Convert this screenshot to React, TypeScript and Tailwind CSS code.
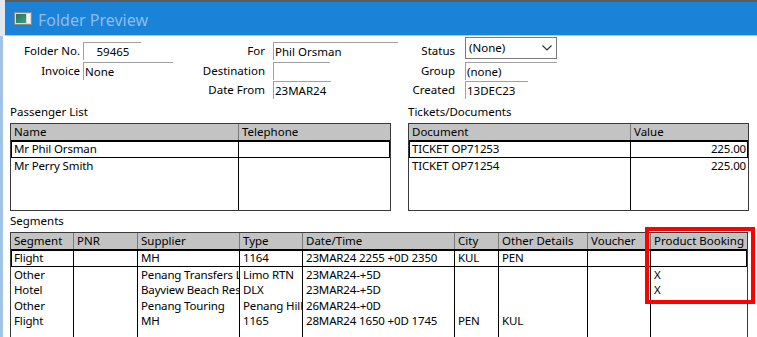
import React from "react"

const font = "font-['Noto_Sans',sans-serif]"

function Label({ children, className }: { children?: React.ReactNode; className: string }) {
	return <div className={`h-[18px] shrink-0 text-right text-[11.5px] leading-[18px] text-black ${className}`}>{children}</div>
}

function Input({ value, className }: { value?: string; className: string }) {
	return (
		<div
			className={`h-[18px] overflow-hidden border-t border-l border-[#a0a0a0] bg-white pl-[1px] text-[11.5px] leading-[17px] whitespace-nowrap text-black ${className}`}
		>
			{value}
		</div>
	)
}

function StatusSelect() {
	return (
		<div className="flex h-[22px] w-[92px] items-center justify-between border border-[#7a7a7a] bg-white pr-[4px] pl-[3px] text-[11.5px] text-black">
			<span>(None)</span>
			<svg width="10" height="6" viewBox="0 0 10 6">
				<polyline points="0.5,0.5 5,5 9.5,0.5" fill="none" stroke="#333" strokeWidth="1.2" />
			</svg>
		</div>
	)
}

function FolderForm() {
	return (
		<div className="flex flex-col pt-[1px]">
			<div className="flex h-[23px] items-end">
				<Label className="w-[78px] pr-[1px]">Folder No.</Label>
				<div className="w-[119px] shrink-0 pl-[2px]">
					<Input value="59465" className="w-[58px] pl-0 text-center" />
				</div>
				<Label className="w-[67px] pr-[2px]">For</Label>
				<div className="w-[133px] shrink-0 pl-[6px]">
					<Input value="Phil Orsman" className="w-[125px]" />
				</div>
				<Label className="w-[57px] pr-[2px]">Status</Label>
				<div className="shrink-0 self-start pl-[8px]">
					<StatusSelect />
				</div>
			</div>
			<div className="flex h-[20px] items-end">
				<Label className="w-[78px] pr-[1px]">Invoice</Label>
				<div className="w-[119px] shrink-0 pl-[2px]">
					<Input value="None" className="w-[90px]" />
				</div>
				<Label className="w-[67px] pr-[2px]">Destination</Label>
				<div className="w-[133px] shrink-0 pl-[6px]">
					<Input className="w-[57px]" />
				</div>
				<Label className="w-[57px] pr-[2px]">Group</Label>
				<div className="shrink-0 pl-[8px]">
					<Input value="(none)" className="w-[92px]" />
				</div>
			</div>
			<div className="flex h-[19px] items-end">
				<div className="w-[197px] shrink-0" />
				<Label className="w-[67px] pr-[2px]">Date From</Label>
				<div className="w-[133px] shrink-0 pl-[6px]">
					<Input value="23MAR24" className="w-[58px]" />
				</div>
				<Label className="w-[57px] pr-[2px]">Created</Label>
				<div className="shrink-0 pl-[8px]">
					<Input value="13DEC23" className="w-[63px]" />
				</div>
			</div>
		</div>
	)
}

interface Column {
	title: string
	width: number
	right?: boolean
}

function Grid({
	columns,
	rows,
	height,
	rowHeight,
}: {
	columns: Column[]
	rows: string[][]
	height: number
	rowHeight: number
}) {
	return (
		<div className="flex flex-col overflow-hidden border border-[#3a3a3a] bg-white" style={{ height }}>
			<div className="flex h-[17px] shrink-0 border-b border-black bg-[#c3c3c3]">
				{columns.map((col, i) => (
					<div
						key={col.title}
						className={`shrink-0 overflow-hidden pl-[3px] text-[11.5px] leading-[16px] whitespace-nowrap text-black ${
							i > 0 ? "border-l border-[#7a7a7a]" : ""
						}`}
						style={{ width: col.width }}
					>
						{col.title}
					</div>
				))}
			</div>
			{rows.map((row, r) => (
				<div
					key={r}
					className={`flex shrink-0 ${r === 0 ? "outline-1 -outline-offset-1 outline-black" : ""}`}
					style={{ height: r === 0 ? rowHeight + 1 : rowHeight }}
				>
					{columns.map((col, i) => (
						<div
							key={col.title}
							className={`shrink-0 overflow-hidden text-[11.5px] tracking-[-0.15px] whitespace-nowrap text-black ${
								i > 0 ? "border-l border-black" : ""
							} ${col.right ? "pr-[2px] text-right" : "pl-[3px]"}`}
							style={{ width: col.width, lineHeight: `${rowHeight}px` }}
						>
							{row[i]}
						</div>
					))}
				</div>
			))}
			<div className="flex flex-1">
				{columns.map((col, i) => (
					<div key={col.title} className={`shrink-0 ${i > 0 ? "border-l border-black" : ""}`} style={{ width: col.width }} />
				))}
			</div>
		</div>
	)
}

function SectionLabel({ children }: { children: React.ReactNode }) {
	return <div className="h-[20px] text-[11.5px] leading-[20px] text-black">{children}</div>
}

const passengerColumns: Column[] = [
	{ title: "Name", width: 227 },
	{ title: "Telephone", width: 152 },
]

const ticketColumns: Column[] = [
	{ title: "Document", width: 221 },
	{ title: "Value", width: 118, right: true },
]

const segmentColumns: Column[] = [
	{ title: "Segment", width: 62 },
	{ title: "PNR", width: 64 },
	{ title: "Supplier", width: 102 },
	{ title: "Type", width: 63 },
	{ title: "Date/Time", width: 152 },
	{ title: "City", width: 44 },
	{ title: "Other Details", width: 89 },
	{ title: "Voucher", width: 63 },
	{ title: "Product Booking", width: 97 },
]

const segments = [
	["Flight", "", "MH", "1164", "23MAR24 2255 +0D 2350", "KUL", "PEN", "", ""],
	["Other", "", "Penang Transfers Ltd", "Limo RTN", "23MAR24-+5D", "", "", "", "X"],
	["Hotel", "", "Bayview Beach Resort", "DLX", "23MAR24-+5D", "", "", "", "X"],
	["Other", "", "Penang Touring", "Penang Hill", "26MAR24-+0D", "", "", "", ""],
	["Flight", "", "MH", "1165", "28MAR24 1650 +0D 1745", "PEN", "KUL", "", ""],
]

function WindowIcon() {
	return (
		<svg width="18" height="13" viewBox="0 0 18 13">
			<defs>
				<linearGradient id="pane" x1="0" y1="0" x2="1" y2="1">
					<stop offset="0" stopColor="#2f6e62" />
					<stop offset="1" stopColor="#3aa27a" />
				</linearGradient>
			</defs>
			<rect x="0.5" y="0.5" width="17" height="12" fill="#d9d9d9" stroke="#8a8a8a" />
			<rect x="2" y="2" width="10" height="9" fill="url(#pane)" />
			<rect x="13" y="2" width="3" height="9" fill="#f4f4f4" />
		</svg>
	)
}

export default function App() {
	return (
		<div className={`relative flex h-[337px] w-[757px] flex-col overflow-hidden bg-white ${font}`}>
			<div className="flex h-[36px] shrink-0">
				<div className="w-[5px] shrink-0 bg-[#e2e7ed]" />
				<div className="flex flex-1 flex-col border-t-2 border-[#5c5c5c]">
					<div className="flex h-[33px] items-center gap-[6px] bg-[#1a83d8] pl-[9px]">
						<WindowIcon />
						<span className="pt-[2px] text-[16px] leading-none text-[#8dbdeb]">Folder Preview</span>
					</div>
					<div className="h-[1px] bg-[#b4c6d8]" />
				</div>
			</div>
			<div className="flex flex-1">
				<div className="w-[3px] shrink-0 bg-[#a0c3e6]" />
				<div className="flex flex-1 flex-col">
					<FolderForm />
					<div className="flex gap-[17px] pt-[3px] pl-[7px]">
						<div className="flex w-[381px] flex-col">
							<SectionLabel>Passenger List</SectionLabel>
							<div className="pt-[1px]">
								<Grid
									columns={passengerColumns}
									rows={[
										["Mr Phil Orsman", ""],
										["Mr Perry Smith", ""],
									]}
									height={88}
									rowHeight={16}
								/>
							</div>
						</div>
						<div className="flex w-[341px] flex-col">
							<SectionLabel>Tickets/Documents</SectionLabel>
							<div className="pt-[1px]">
								<Grid
									columns={ticketColumns}
									rows={[
										["TICKET OP71253", "225.00"],
										["TICKET OP71254", "225.00"],
									]}
									height={88}
									rowHeight={16}
								/>
							</div>
						</div>
					</div>
					<div className="flex w-[745px] flex-col pl-[7px]">
						<SectionLabel>Segments</SectionLabel>
						<div className="pt-[1px]">
							<Grid columns={segmentColumns} rows={segments} height={120} rowHeight={15.5} />
						</div>
					</div>
				</div>
			</div>
			<div className="absolute top-[227px] left-[645px] h-[77px] w-[110px] border-4 border-[#ff0000]" />
		</div>
	)
}
